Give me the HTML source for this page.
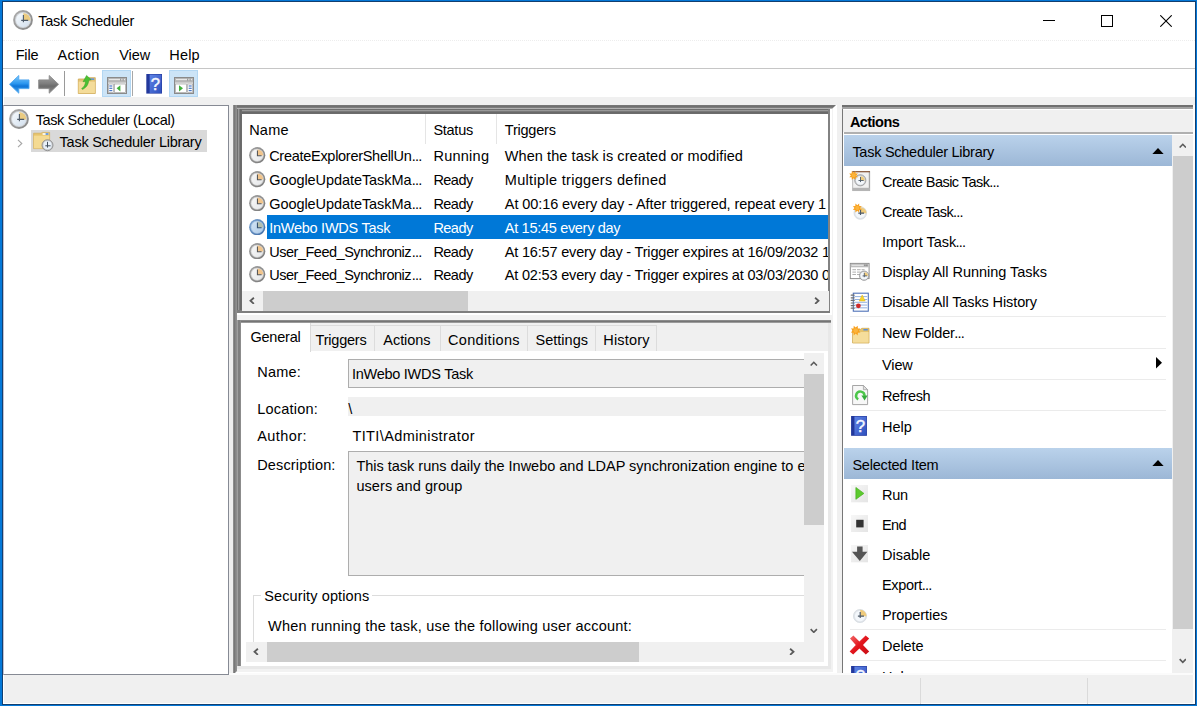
<!DOCTYPE html>
<html lang="en"><head><meta charset="utf-8"><title>Task Scheduler</title>
<style>
html,body{margin:0;padding:0;background:#fff;}
body{width:1197px;height:706px;overflow:hidden;position:relative;font-family:"Liberation Sans", sans-serif;font-size:14.5px;}
#w{position:absolute;left:0;top:0;width:1197px;height:706px;overflow:hidden;}
#w div,#w svg{position:absolute;}
.t{white-space:pre;line-height:20px;height:20px;}
.t span{position:static;}
</style></head>
<body><div id="w">
<div style="left:0.00px;top:0.00px;width:1197.00px;height:706.00px;background:#0478d8;"></div>
<div style="left:2.20px;top:0.90px;width:1193.80px;height:704.00px;background:#123f70;"></div>
<div style="left:3.00px;top:2.00px;width:1191.70px;height:702.00px;background:#ffffff;"></div>
<svg style="left:13.00px;top:10.00px" width="20" height="20" viewBox="0 0 20 20"><defs><linearGradient id="cg1" x1="0" y1="0" x2="1" y2="1"><stop offset="0" stop-color="#aeaeae"/><stop offset="1" stop-color="#858585"/></linearGradient><linearGradient id="cg1f" x1="0" y1="0" x2="1" y2="1"><stop offset="0" stop-color="#f6fafd"/><stop offset="1" stop-color="#d3e0ee"/></linearGradient></defs><circle cx="10" cy="10" r="9.9" fill="url(#cg1)"/><circle cx="10" cy="10" r="8.0" fill="#d2d6db"/><circle cx="10" cy="10" r="7.0" fill="url(#cg1f)"/><path d="M10.4 10.4 V3 A7.3 7.3 0 0 1 17.4 10.4 Z" fill="#ebcb80"/><path d="M10.4 5 V12.2 M8.2 10.4 H15.2" fill="none" stroke="#4d5a68" stroke-width="1.1"/></svg>
<div class="t" style="left:38.20px;top:10.77px;letter-spacing:-0.226px;color:#000;"><span id="t1">Task Scheduler</span></div>
<div style="left:1043.00px;top:20.00px;width:12.00px;height:1.00px;background:#000;"></div>
<div style="left:1101.00px;top:15.00px;width:12.00px;height:12.00px;border:1px solid #000;box-sizing:border-box;"></div>
<svg style="left:1160.00px;top:15.00px" width="12" height="12" viewBox="0 0 12 12"><path d="M0.3 0.3 L11.7 11.7 M11.7 0.3 L0.3 11.7" stroke="#000" stroke-width="1.1" fill="none"/></svg>
<div style="left:3.00px;top:40.00px;width:1191.70px;height:1.00px;border-top:1px dotted #ededed;height:0;"></div>
<div class="t" style="left:15.70px;top:45.17px;letter-spacing:-0.192px;color:#000;"><span id="t2">File</span></div>
<div class="t" style="left:57.50px;top:45.17px;letter-spacing:0.317px;color:#000;"><span id="t3">Action</span></div>
<div class="t" style="left:119.20px;top:45.17px;letter-spacing:-0.024px;color:#000;"><span id="t4">View</span></div>
<div class="t" style="left:169.30px;top:45.17px;letter-spacing:0.157px;color:#000;"><span id="t5">Help</span></div>
<div style="left:3.00px;top:67.60px;width:1191.70px;height:1.80px;background:#c6c6c6;"></div>
<svg style="left:9.00px;top:75.00px" width="21" height="19" viewBox="0 0 21 19"><defs><linearGradient id="ba" x1="0" y1="0" x2="0" y2="1"><stop offset="0" stop-color="#7fccfc"/><stop offset="0.45" stop-color="#2c97ef"/><stop offset="0.6" stop-color="#0f76d8"/><stop offset="1" stop-color="#4aa8f2"/></linearGradient></defs><polygon points="0.5,9.3 9.8,0.5 9.8,4.9 20,4.9 20,13.6 9.8,13.6 9.8,18.2" fill="url(#ba)" stroke="#4fa6ee" stroke-width="0.9" stroke-linejoin="round"/></svg>
<svg style="left:37.50px;top:75.00px" width="21" height="19" viewBox="0 0 21 19"><defs><linearGradient id="fa" x1="0" y1="0" x2="0" y2="1"><stop offset="0" stop-color="#a4a4a4"/><stop offset="0.45" stop-color="#7e7e7e"/><stop offset="0.6" stop-color="#6c6c6c"/><stop offset="1" stop-color="#8e8e8e"/></linearGradient></defs><polygon points="20.5,9.3 11.2,0.5 11.2,4.9 0.7,4.9 0.7,13.6 11.2,13.6 11.2,18.2" fill="url(#fa)" stroke="#8a8a8a" stroke-width="0.9" stroke-linejoin="round"/></svg>
<div style="left:64.00px;top:71.30px;width:1.00px;height:24.70px;background:#9a9a9a;"></div>
<svg style="left:77.00px;top:74.00px" width="20" height="21" viewBox="0 0 20 21"><path d="M1.3 5 H8.5 L10 3.7 H18.3 V19.5 H1.3 Z" fill="#e6c374" stroke="#cfa955" stroke-width="0.8"/><rect x="1.7" y="7.6" width="16.2" height="11.5" fill="#f4dc9a"/><rect x="12.2" y="4.4" width="5" height="1.5" fill="#5a8fd8"/><path d="M4.6 14.6 C6.6 13.2 8.6 11 8.4 7.2 L6 7.8 L9.6 1.4 L14.2 5.8 L11.6 6.4 C11.6 11 8.6 13.8 5.6 15.4 Z" fill="#4cc033" stroke="#35a022" stroke-width="0.5"/></svg>
<div style="left:102.00px;top:70.00px;width:28.70px;height:26.80px;background:#cce4f7;border:1px solid #b3d7f3;box-sizing:border-box;"></div>
<svg style="left:107.00px;top:77.00px" width="20" height="17" viewBox="0 0 20 17"><rect x="0.5" y="0.5" width="19" height="16" fill="#eeeeee" stroke="#8a8a8a"/><rect x="1" y="1" width="18" height="4.6" fill="#b6b6b6"/><rect x="2" y="2.1" width="16" height="1" fill="#ededed"/><rect x="13.2" y="1.6" width="1" height="2" fill="#8a8a8a"/><rect x="15.6" y="1.6" width="1" height="2" fill="#8a8a8a"/><rect x="1.3" y="7" width="5" height="8.6" fill="#fff" stroke="#a2a2a2" stroke-width="0.7"/><rect x="2.3" y="8.4" width="3" height="1.2" fill="#4a78c8"/><rect x="2.3" y="10.7" width="3" height="1.2" fill="#4a78c8"/><rect x="2.3" y="13" width="3" height="1.2" fill="#4a78c8"/><rect x="7.6" y="7" width="11" height="8.6" fill="#fff" stroke="#a2a2a2" stroke-width="0.7"/><polygon points="9.6,11.3 13.4,8.2 13.4,14.4" fill="#3fb03a"/></svg>
<div style="left:132.00px;top:71.30px;width:1.00px;height:24.70px;background:#a8a8a8;"></div>
<svg style="left:145.60px;top:74.00px" width="16.3" height="19.6" viewBox="0 0 16 20"><defs><linearGradient id="hg219" x1="0" y1="0" x2="1" y2="1"><stop offset="0" stop-color="#5f84e6"/><stop offset="1" stop-color="#2d4fbd"/></linearGradient></defs><rect x="0" y="0" width="16" height="20" fill="#22389c"/><rect x="3.4" y="0.6" width="12" height="18.8" fill="url(#hg219)"/><text x="9.4" y="16.2" font-family="Liberation Sans, sans-serif" font-size="17" fill="#f4f6ff" stroke="#f4f6ff" stroke-width="0.5" text-anchor="middle">?</text></svg>
<div style="left:169.20px;top:70.00px;width:28.80px;height:26.80px;background:#cce4f7;border:1px solid #b3d7f3;box-sizing:border-box;"></div>
<svg style="left:174.30px;top:77.00px" width="20" height="17" viewBox="0 0 20 17"><rect x="0.5" y="0.5" width="19" height="16" fill="#eeeeee" stroke="#8a8a8a"/><rect x="1" y="1" width="18" height="4.6" fill="#b6b6b6"/><rect x="2" y="2.1" width="16" height="1" fill="#ededed"/><rect x="13.2" y="1.6" width="1" height="2" fill="#8a8a8a"/><rect x="15.6" y="1.6" width="1" height="2" fill="#8a8a8a"/><rect x="13.7" y="7" width="5" height="8.6" fill="#fff" stroke="#a2a2a2" stroke-width="0.7"/><rect x="14.7" y="8.4" width="3" height="1.2" fill="#4a78c8"/><rect x="14.7" y="10.7" width="3" height="1.2" fill="#4a78c8"/><rect x="14.7" y="13" width="3" height="1.2" fill="#4a78c8"/><rect x="1.4" y="7" width="11" height="8.6" fill="#fff" stroke="#a2a2a2" stroke-width="0.7"/><polygon points="9,11.3 5,8.2 5,14.4" fill="#3fb03a"/></svg>
<div style="left:4.00px;top:97.00px;width:1190.70px;height:8.00px;background:#f0f0f0;"></div>
<div style="left:4.00px;top:105.00px;width:1189.40px;height:570.00px;background:#f0f0f0;"></div>
<div style="left:3.00px;top:105.00px;width:226.00px;height:570.00px;background:#fff;border:1px solid #868a94;border-left-color:#c4c2d0;box-sizing:border-box;"></div>
<svg style="left:9.00px;top:109.00px" width="20" height="20" viewBox="0 0 20 20"><defs><linearGradient id="cg2" x1="0" y1="0" x2="1" y2="1"><stop offset="0" stop-color="#aeaeae"/><stop offset="1" stop-color="#858585"/></linearGradient><linearGradient id="cg2f" x1="0" y1="0" x2="1" y2="1"><stop offset="0" stop-color="#f6fafd"/><stop offset="1" stop-color="#d3e0ee"/></linearGradient></defs><circle cx="10" cy="10" r="9.9" fill="url(#cg2)"/><circle cx="10" cy="10" r="8.0" fill="#d2d6db"/><circle cx="10" cy="10" r="7.0" fill="url(#cg2f)"/><path d="M10.4 10.4 V3 A7.3 7.3 0 0 1 17.4 10.4 Z" fill="#ebcb80"/><path d="M10.4 5 V12.2 M8.2 10.4 H15.2" fill="none" stroke="#4d5a68" stroke-width="1.1"/></svg>
<div class="t" style="left:35.70px;top:109.57px;letter-spacing:-0.386px;color:#000;"><span id="t6">Task Scheduler (Local)</span></div>
<svg style="left:16.50px;top:138.50px" width="6" height="9" viewBox="0 0 6 9"><path d="M1 0.8 L4.8 4.5 L1 8.2" stroke="#a6a6a6" stroke-width="1.1" fill="none"/></svg>
<div style="left:30.60px;top:130.20px;width:176.30px;height:21.80px;background:#d9d9d9;"></div>
<svg style="left:33.00px;top:131.00px" width="21" height="21" viewBox="0 0 21 21"><path d="M0.6 2.2 H8 L9.4 1.4 H16.6 V17.6 H0.6 Z" fill="#e7c46c" stroke="#d3ad57" stroke-width="0.7"/><rect x="0.9" y="4.6" width="15.4" height="12.7" fill="#f4da92"/><rect x="9.6" y="2.2" width="5.8" height="1.6" fill="#fff"/><rect x="12.6" y="2.2" width="2.8" height="1.6" fill="#4d8be0"/><circle cx="14.5" cy="14.2" r="5.5" fill="#c4c7cb" stroke="#858585" stroke-width="0.8"/><circle cx="14.5" cy="14.2" r="4.1" fill="#e9f1f9"/><path d="M14.5 10.8 V16.6 M12.3 14.8 H17.6" stroke="#44515f" stroke-width="1" fill="none"/></svg>
<div class="t" style="left:59.60px;top:132.07px;letter-spacing:-0.257px;color:#000;"><span id="t7">Task Scheduler Library</span></div>
<div style="left:233.00px;top:105.00px;width:603.50px;height:570.00px;background:#fff;"></div>
<div style="left:233.00px;top:105.00px;width:600.00px;height:566.50px;background:#f2f2f2;"></div>
<div style="left:241.80px;top:113.80px;width:586.70px;height:196.40px;background:#fff;"></div>
<div style="left:233.00px;top:105.00px;width:603.00px;height:3.80px;background:linear-gradient(to bottom,#767676 0px 1px,#707070 1px 2px,#7c7c7c 2px 2.7px,#9c9c9c 2.7px 3.8px);clip-path:polygon(0 0,100% 0,calc(100% - 3.8px) 100%,0 100%);"></div>
<div style="left:237.00px;top:108.80px;width:593.00px;height:5.00px;background:linear-gradient(to bottom,#707070 0px 1.3px,#999999 1.3px 2.4px,#787878 2.4px 3.2px,#696969 3.2px 4.2px,#6c6c6c 4.2px 5px);"></div>
<div style="left:233.00px;top:105.00px;width:4.00px;height:570.00px;background:linear-gradient(to right,#8e8e8e 0px 1px,#787878 1px 2px,#868686 2px 3px,#8e8e8e 3px 4px);clip-path:polygon(0 0,100% 0,100% calc(100% - 4px),0 100%);"></div>
<div style="left:237.00px;top:108.80px;width:4.80px;height:204.00px;background:linear-gradient(to right,#6e6e6e 0px 1px,#999999 1px 2px,#7c7c7c 2px 3px,#696969 3px 4px,#6c6c6c 4px 4.8px);"></div>
<div style="left:828.30px;top:109.00px;width:1.90px;height:203.80px;background:#828282;"></div>
<div style="left:237.00px;top:310.30px;width:593.00px;height:2.50px;background:#7e7e7e;"></div>
<div style="left:830.20px;top:109.00px;width:1.50px;height:205.00px;background:#fff;"></div>
<div style="left:237.00px;top:312.90px;width:594.50px;height:2.00px;background:#fff;"></div>
<div style="left:425.00px;top:114.00px;width:1.00px;height:30.00px;background:#e5e5e5;"></div>
<div style="left:496.00px;top:114.00px;width:1.00px;height:30.00px;background:#e5e5e5;"></div>
<div class="t" style="left:249.20px;top:119.97px;letter-spacing:0.204px;color:#000;"><span id="t8">Name</span></div>
<div class="t" style="left:433.40px;top:119.97px;letter-spacing:-0.262px;color:#000;"><span id="t9">Status</span></div>
<div class="t" style="left:504.80px;top:119.97px;letter-spacing:-0.220px;color:#000;"><span id="t10">Triggers</span></div>
<div style="left:0;top:0;width:828.3px;height:291px;overflow:hidden"><svg style="left:249.20px;top:147.40px" width="16.4" height="16.4" viewBox="0 0 20 20"><defs><linearGradient id="cg3" x1="0" y1="0" x2="1" y2="1"><stop offset="0" stop-color="#a2a2a2"/><stop offset="1" stop-color="#787878"/></linearGradient><linearGradient id="cg3f" x1="0" y1="0" x2="1" y2="1"><stop offset="0" stop-color="#f7f7f7"/><stop offset="1" stop-color="#e6e8ea"/></linearGradient></defs><circle cx="10" cy="10" r="9.9" fill="url(#cg3)"/><circle cx="10" cy="10" r="8.0" fill="#cdcdcd"/><circle cx="10" cy="10" r="7.0" fill="url(#cg3f)"/><path d="M10.4 10.4 V3 A7.3 7.3 0 0 1 17.4 10.4 Z" fill="#f1c58c"/><path d="M10.3 4.4 V10.6 H15.4" fill="none" stroke="#555555" stroke-width="1.3"/></svg><div class="t" style="left:269.20px;top:146.37px;letter-spacing:-0.285px;color:#000;"><span id="t11">CreateExplorerShellUn</span></div><div class="t" style="left:411.70px;top:146.37px;letter-spacing:-0.800px;color:#000;"><span id="t12">...</span></div><div class="t" style="left:433.40px;top:146.37px;letter-spacing:0.264px;color:#000;"><span id="t13">Running</span></div><div class="t" style="left:504.80px;top:146.37px;letter-spacing:0.079px;color:#000;"><span id="t14">When the task is created or modified</span></div><svg style="left:249.20px;top:171.20px" width="16.4" height="16.4" viewBox="0 0 20 20"><defs><linearGradient id="cg4" x1="0" y1="0" x2="1" y2="1"><stop offset="0" stop-color="#a2a2a2"/><stop offset="1" stop-color="#787878"/></linearGradient><linearGradient id="cg4f" x1="0" y1="0" x2="1" y2="1"><stop offset="0" stop-color="#f7f7f7"/><stop offset="1" stop-color="#e6e8ea"/></linearGradient></defs><circle cx="10" cy="10" r="9.9" fill="url(#cg4)"/><circle cx="10" cy="10" r="8.0" fill="#cdcdcd"/><circle cx="10" cy="10" r="7.0" fill="url(#cg4f)"/><path d="M10.4 10.4 V3 A7.3 7.3 0 0 1 17.4 10.4 Z" fill="#f1c58c"/><path d="M10.3 4.4 V10.6 H15.4" fill="none" stroke="#555555" stroke-width="1.3"/></svg><div class="t" style="left:269.20px;top:170.17px;letter-spacing:-0.064px;color:#000;"><span id="t15">GoogleUpdateTaskMa</span></div><div class="t" style="left:411.70px;top:170.17px;letter-spacing:-0.800px;color:#000;"><span id="t16">...</span></div><div class="t" style="left:433.40px;top:170.17px;letter-spacing:-0.530px;color:#000;"><span id="t17">Ready</span></div><div class="t" style="left:504.80px;top:170.17px;letter-spacing:0.319px;color:#000;"><span id="t18">Multiple triggers defined</span></div><svg style="left:249.20px;top:195.00px" width="16.4" height="16.4" viewBox="0 0 20 20"><defs><linearGradient id="cg5" x1="0" y1="0" x2="1" y2="1"><stop offset="0" stop-color="#a2a2a2"/><stop offset="1" stop-color="#787878"/></linearGradient><linearGradient id="cg5f" x1="0" y1="0" x2="1" y2="1"><stop offset="0" stop-color="#f7f7f7"/><stop offset="1" stop-color="#e6e8ea"/></linearGradient></defs><circle cx="10" cy="10" r="9.9" fill="url(#cg5)"/><circle cx="10" cy="10" r="8.0" fill="#cdcdcd"/><circle cx="10" cy="10" r="7.0" fill="url(#cg5f)"/><path d="M10.4 10.4 V3 A7.3 7.3 0 0 1 17.4 10.4 Z" fill="#f1c58c"/><path d="M10.3 4.4 V10.6 H15.4" fill="none" stroke="#555555" stroke-width="1.3"/></svg><div class="t" style="left:269.20px;top:193.97px;letter-spacing:-0.064px;color:#000;"><span id="t19">GoogleUpdateTaskMa</span></div><div class="t" style="left:411.70px;top:193.97px;letter-spacing:-0.800px;color:#000;"><span id="t20">...</span></div><div class="t" style="left:433.40px;top:193.97px;letter-spacing:-0.530px;color:#000;"><span id="t21">Ready</span></div><div class="t" style="left:504.80px;top:193.97px;letter-spacing:-0.085px;color:#000;"><span id="t22">At 00:16 every day - After triggered, repeat every 1</span> hour for a duration of 1 day.</div><div style="left:266.80px;top:215.30px;width:562.00px;height:23.40px;background:#0078d7;"></div><svg style="left:249.20px;top:218.80px" width="16.4" height="16.4" viewBox="0 0 20 20"><defs><linearGradient id="cg6" x1="0" y1="0" x2="1" y2="1"><stop offset="0" stop-color="#7fa6d2"/><stop offset="1" stop-color="#3d6aa3"/></linearGradient><linearGradient id="cg6f" x1="0" y1="0" x2="1" y2="1"><stop offset="0" stop-color="#d2e4f5"/><stop offset="1" stop-color="#b0cce8"/></linearGradient></defs><circle cx="10" cy="10" r="9.9" fill="url(#cg6)"/><circle cx="10" cy="10" r="8.0" fill="#a3c2e3"/><circle cx="10" cy="10" r="7.0" fill="url(#cg6f)"/><path d="M10.4 10.4 V3 A7.3 7.3 0 0 1 17.4 10.4 Z" fill="#b5c0b0"/><path d="M10.3 4.4 V10.6 H15.4" fill="none" stroke="#35506e" stroke-width="1.3"/></svg><div class="t" style="left:269.20px;top:217.77px;letter-spacing:-0.259px;color:#fff;"><span id="t23">InWebo IWDS Task</span></div><div class="t" style="left:433.40px;top:217.77px;letter-spacing:-0.530px;color:#fff;"><span id="t24">Ready</span></div><div class="t" style="left:504.80px;top:217.77px;letter-spacing:-0.301px;color:#fff;"><span id="t25">At 15:45 every day</span></div><svg style="left:249.20px;top:242.60px" width="16.4" height="16.4" viewBox="0 0 20 20"><defs><linearGradient id="cg7" x1="0" y1="0" x2="1" y2="1"><stop offset="0" stop-color="#a2a2a2"/><stop offset="1" stop-color="#787878"/></linearGradient><linearGradient id="cg7f" x1="0" y1="0" x2="1" y2="1"><stop offset="0" stop-color="#f7f7f7"/><stop offset="1" stop-color="#e6e8ea"/></linearGradient></defs><circle cx="10" cy="10" r="9.9" fill="url(#cg7)"/><circle cx="10" cy="10" r="8.0" fill="#cdcdcd"/><circle cx="10" cy="10" r="7.0" fill="url(#cg7f)"/><path d="M10.4 10.4 V3 A7.3 7.3 0 0 1 17.4 10.4 Z" fill="#f1c58c"/><path d="M10.3 4.4 V10.6 H15.4" fill="none" stroke="#555555" stroke-width="1.3"/></svg><div class="t" style="left:269.20px;top:241.57px;letter-spacing:-0.481px;color:#000;"><span id="t26">User_Feed_Synchroniz</span></div><div class="t" style="left:411.70px;top:241.57px;letter-spacing:-0.800px;color:#000;"><span id="t27">...</span></div><div class="t" style="left:433.40px;top:241.57px;letter-spacing:-0.530px;color:#000;"><span id="t28">Ready</span></div><div class="t" style="left:504.80px;top:241.57px;letter-spacing:-0.180px;color:#000;"><span id="t29">At 16:57 every day - Trigger expires at 16/09/2032</span> 16:57:00.</div><svg style="left:249.20px;top:266.40px" width="16.4" height="16.4" viewBox="0 0 20 20"><defs><linearGradient id="cg8" x1="0" y1="0" x2="1" y2="1"><stop offset="0" stop-color="#a2a2a2"/><stop offset="1" stop-color="#787878"/></linearGradient><linearGradient id="cg8f" x1="0" y1="0" x2="1" y2="1"><stop offset="0" stop-color="#f7f7f7"/><stop offset="1" stop-color="#e6e8ea"/></linearGradient></defs><circle cx="10" cy="10" r="9.9" fill="url(#cg8)"/><circle cx="10" cy="10" r="8.0" fill="#cdcdcd"/><circle cx="10" cy="10" r="7.0" fill="url(#cg8f)"/><path d="M10.4 10.4 V3 A7.3 7.3 0 0 1 17.4 10.4 Z" fill="#f1c58c"/><path d="M10.3 4.4 V10.6 H15.4" fill="none" stroke="#555555" stroke-width="1.3"/></svg><div class="t" style="left:269.20px;top:265.37px;letter-spacing:-0.481px;color:#000;"><span id="t30">User_Feed_Synchroniz</span></div><div class="t" style="left:411.70px;top:265.37px;letter-spacing:-0.800px;color:#000;"><span id="t31">...</span></div><div class="t" style="left:433.40px;top:265.37px;letter-spacing:-0.530px;color:#000;"><span id="t32">Ready</span></div><div class="t" style="left:504.80px;top:265.37px;letter-spacing:-0.180px;color:#000;"><span id="t33">At 02:53 every day - Trigger expires at 03/03/2030</span> 02:53:00.</div></div>
<div style="left:241.50px;top:291.00px;width:587.00px;height:19.50px;background:#f0f0f0;"></div>
<div style="left:263.00px;top:291.00px;width:205.00px;height:19.50px;background:#cdcdcd;"></div>
<svg style="left:248.60px;top:296.70px" width="6" height="7.6" viewBox="0 0 6 8"><path d="M5 0.8 L1.4 4 L5 7.2" stroke="#5a5a5a" stroke-width="1.9" fill="none"/></svg>
<svg style="left:814.20px;top:296.70px" width="6" height="7.6" viewBox="0 0 6 8"><path d="M1 0.8 L4.6 4 L1 7.2" stroke="#5a5a5a" stroke-width="1.9" fill="none"/></svg>
<div style="left:237.00px;top:319.80px;width:593.80px;height:349.20px;background:#e8e8e8;"></div>
<div style="left:241.00px;top:322.80px;width:586.60px;height:29.00px;background:#f0f0f0;"></div>
<div style="left:241.00px;top:351.00px;width:586.60px;height:314.80px;background:#fff;"></div>
<div style="left:241.00px;top:322.80px;width:69.40px;height:29.00px;background:#fff;"></div>
<div style="left:238.00px;top:319.80px;width:592.70px;height:3.00px;background:linear-gradient(to bottom,#8a8a8a 0 0.8px,#757575 0.8px 2.2px,#9a9a9a 2.2px 3px);"></div>
<div style="left:237.00px;top:319.80px;width:4.00px;height:346.00px;background:linear-gradient(to right,#a0a0a0 0 1px,#808080 1px 3.3px,#8c8c8c 3.3px 4px);"></div>
<div style="left:310.40px;top:325.00px;width:346.60px;height:26.00px;background:#f0f0f0;box-sizing:border-box;border:1px solid #dcdcdc;border-bottom:none;"></div>
<div style="left:374.30px;top:325.00px;width:1.00px;height:26.00px;background:#dcdcdc;"></div>
<div class="t" style="left:315.60px;top:329.57px;letter-spacing:-0.220px;color:#000;"><span id="t34">Triggers</span></div>
<div style="left:439.50px;top:325.00px;width:1.00px;height:26.00px;background:#dcdcdc;"></div>
<div class="t" style="left:383.30px;top:329.57px;letter-spacing:-0.044px;color:#000;"><span id="t35">Actions</span></div>
<div style="left:527.40px;top:325.00px;width:1.00px;height:26.00px;background:#dcdcdc;"></div>
<div class="t" style="left:447.90px;top:329.57px;letter-spacing:0.354px;color:#000;"><span id="t36">Conditions</span></div>
<div style="left:595.00px;top:325.00px;width:1.00px;height:26.00px;background:#dcdcdc;"></div>
<div class="t" style="left:535.50px;top:329.57px;letter-spacing:0.013px;color:#000;"><span id="t37">Settings</span></div>
<div style="left:656.00px;top:325.00px;width:1.00px;height:26.00px;background:#dcdcdc;"></div>
<div class="t" style="left:603.30px;top:329.57px;letter-spacing:0.163px;color:#000;"><span id="t38">History</span></div>
<div style="left:310.00px;top:323.00px;width:1.00px;height:28.50px;background:#d9d9d9;"></div>
<div class="t" style="left:250.40px;top:326.97px;letter-spacing:-0.199px;color:#000;"><span id="t39">General</span></div>
<div style="left:0;top:0;width:803.9px;height:641.6px;overflow:hidden"><div class="t" style="left:257.20px;top:362.37px;letter-spacing:0.220px;color:#000;"><span id="t40">Name:</span></div><div style="left:348.00px;top:359.40px;width:480.00px;height:28.30px;background:#f0f0f0;box-sizing:border-box;border:1px solid #adadad;"></div><div class="t" style="left:351.90px;top:363.67px;letter-spacing:-0.259px;color:#000;"><span id="t41">InWebo IWDS Task</span></div><div class="t" style="left:257.20px;top:398.57px;letter-spacing:0.230px;color:#000;"><span id="t42">Location:</span></div><div style="left:348.00px;top:396.50px;width:480.00px;height:19.70px;background:#f0f0f0;"></div><div class="t" style="left:348.20px;top:398.57px;letter-spacing:0.000px;color:#000;"><span id="t43">\</span></div><div class="t" style="left:257.20px;top:425.97px;letter-spacing:0.442px;color:#000;"><span id="t44">Author:</span></div><div class="t" style="left:352.40px;top:425.97px;letter-spacing:0.405px;color:#000;"><span id="t45">TITI\Administrator</span></div><div class="t" style="left:257.20px;top:454.67px;letter-spacing:0.149px;color:#000;"><span id="t46">Description:</span></div><div style="left:348.00px;top:451.30px;width:480.00px;height:124.60px;background:#f0f0f0;box-sizing:border-box;border:1px solid #adadad;"></div><div class="t" style="left:356.40px;top:456.27px;letter-spacing:-0.006px;color:#000;"><span id="t47">This task runs daily the Inwebo and LDAP synchronization engine to</span> ensure that</div><div class="t" style="left:356.40px;top:475.87px;letter-spacing:0.079px;color:#000;"><span id="t48">users and group</span></div><div style="left:253.00px;top:595.00px;width:600.00px;height:60.00px;box-sizing:border-box;border:1px solid #dcdcdc;"></div><div style="left:261.00px;top:588.00px;width:111.00px;height:16.00px;background:#fff;"></div><div class="t" style="left:264.20px;top:586.27px;letter-spacing:0.122px;color:#000;"><span id="t49">Security options</span></div><div class="t" style="left:268.00px;top:615.97px;letter-spacing:0.220px;color:#000;"><span id="t50">When running the task, use the following user account:</span></div></div>
<div style="left:803.90px;top:352.50px;width:20.10px;height:289.10px;background:#f0f0f0;"></div>
<div style="left:803.90px;top:374.40px;width:20.10px;height:150.60px;background:#cdcdcd;"></div>
<svg style="left:810.20px;top:360.60px" width="7.6" height="5.6" viewBox="0 0 9 6"><path d="M0.8 5 L4.5 1.2 L8.2 5" stroke="#5a5a5a" stroke-width="1.9" fill="none"/></svg>
<svg style="left:810.20px;top:627.60px" width="7.6" height="5.6" viewBox="0 0 9 6"><path d="M0.8 1 L4.5 4.8 L8.2 1" stroke="#5a5a5a" stroke-width="1.9" fill="none"/></svg>
<div style="left:245.50px;top:641.60px;width:578.50px;height:20.10px;background:#f0f0f0;"></div>
<div style="left:266.80px;top:641.60px;width:372.70px;height:20.10px;background:#cdcdcd;"></div>
<svg style="left:252.60px;top:647.80px" width="6" height="7.6" viewBox="0 0 6 8"><path d="M5 0.8 L1.4 4 L5 7.2" stroke="#5a5a5a" stroke-width="1.9" fill="none"/></svg>
<svg style="left:788.60px;top:647.80px" width="6" height="7.6" viewBox="0 0 6 8"><path d="M1 0.8 L4.6 4 L1 7.2" stroke="#5a5a5a" stroke-width="1.9" fill="none"/></svg>
<div style="left:841.50px;top:105.00px;width:352.00px;height:568.00px;background:#fff;box-sizing:border-box;border-style:solid;border-width:0 0 0 1.8px;border-color:#777;"></div>
<div style="left:841.50px;top:105.00px;width:352.00px;height:3.60px;background:linear-gradient(to bottom,#707070 0 2px,#a2a2a2 2px 3.6px);"></div>
<div style="left:843.30px;top:109.60px;width:349.70px;height:22.70px;background:#f0f0f0;"></div>
<div style="left:843.50px;top:132.30px;width:349.50px;height:1.60px;background:#b0b0b0;"></div>
<div class="t" style="left:849.90px;top:111.97px;letter-spacing:-0.545px;color:#000;font-weight:bold;"><span id="t51">Actions</span></div>
<div style="left:843.50px;top:135.00px;width:328.50px;height:30.80px;background:linear-gradient(#bad2eb,#9cb7d6);"></div>
<div class="t" style="left:852.40px;top:142.07px;letter-spacing:-0.267px;color:#000;"><span id="t52">Task Scheduler Library</span></div>
<svg style="left:1152.00px;top:147.50px" width="12" height="6.4" viewBox="0 0 12 6.4"><polygon points="0,6.4 6,0 12,6.4" fill="#000"/></svg>
<div style="left:843.50px;top:447.50px;width:328.50px;height:31.30px;background:linear-gradient(#bad2eb,#9cb7d6);"></div>
<div class="t" style="left:852.40px;top:454.57px;letter-spacing:-0.198px;color:#000;"><span id="t53">Selected Item</span></div>
<svg style="left:1152.00px;top:460.00px" width="12" height="6.4" viewBox="0 0 12 6.4"><polygon points="0,6.4 6,0 12,6.4" fill="#000"/></svg>
<div style="left:0;top:0;width:1172px;height:673px;overflow:hidden"><div class="t" style="left:882.00px;top:172.17px;letter-spacing:-0.537px;color:#000;"><span id="t54">Create Basic Task</span></div><div class="t" style="left:989.30px;top:172.17px;letter-spacing:-0.800px;color:#000;"><span id="t55">...</span></div><div class="t" style="left:882.00px;top:202.17px;letter-spacing:-0.541px;color:#000;"><span id="t56">Create Task</span></div><div class="t" style="left:953.00px;top:202.17px;letter-spacing:-0.800px;color:#000;"><span id="t57">...</span></div><div class="t" style="left:882.00px;top:232.27px;letter-spacing:-0.049px;color:#000;"><span id="t58">Import Task</span></div><div class="t" style="left:955.50px;top:232.27px;letter-spacing:-0.800px;color:#000;"><span id="t59">...</span></div><div class="t" style="left:882.00px;top:262.37px;letter-spacing:-0.036px;color:#000;"><span id="t60">Display All Running Tasks</span></div><div class="t" style="left:882.00px;top:292.27px;letter-spacing:-0.108px;color:#000;"><span id="t61">Disable All Tasks History</span></div><div class="t" style="left:882.00px;top:323.37px;letter-spacing:-0.138px;color:#000;"><span id="t62">New Folder</span></div><div class="t" style="left:954.20px;top:323.37px;letter-spacing:-0.800px;color:#000;"><span id="t63">...</span></div><div class="t" style="left:882.00px;top:354.67px;letter-spacing:-0.124px;color:#000;"><span id="t64">View</span></div><div class="t" style="left:882.00px;top:385.97px;letter-spacing:-0.364px;color:#000;"><span id="t65">Refresh</span></div><div class="t" style="left:882.00px;top:417.37px;letter-spacing:-0.009px;color:#000;"><span id="t66">Help</span></div><div class="t" style="left:882.00px;top:484.57px;letter-spacing:-0.255px;color:#000;"><span id="t67">Run</span></div><div class="t" style="left:882.00px;top:514.67px;letter-spacing:-0.606px;color:#000;"><span id="t68">End</span></div><div class="t" style="left:882.00px;top:544.77px;letter-spacing:0.007px;color:#000;"><span id="t69">Disable</span></div><div class="t" style="left:882.00px;top:574.87px;letter-spacing:-0.304px;color:#000;"><span id="t70">Export</span></div><div class="t" style="left:921.70px;top:574.87px;letter-spacing:-0.800px;color:#000;"><span id="t71">...</span></div><div class="t" style="left:882.00px;top:605.17px;letter-spacing:-0.077px;color:#000;"><span id="t72">Properties</span></div><div class="t" style="left:882.00px;top:635.67px;letter-spacing:-0.064px;color:#000;"><span id="t73">Delete</span></div><div class="t" style="left:882.00px;top:666.97px;letter-spacing:-0.009px;color:#000;"><span id="t74">Help</span></div><div style="left:850.00px;top:316.30px;width:316.00px;height:1.20px;background:#ebebeb;"></div><div style="left:850.00px;top:347.70px;width:316.00px;height:1.20px;background:#ebebeb;"></div><div style="left:850.00px;top:379.00px;width:316.00px;height:1.20px;background:#ebebeb;"></div><div style="left:850.00px;top:409.80px;width:316.00px;height:1.20px;background:#ebebeb;"></div><div style="left:850.00px;top:629.20px;width:316.00px;height:1.20px;background:#ebebeb;"></div><div style="left:850.00px;top:660.30px;width:316.00px;height:1.20px;background:#ebebeb;"></div><svg style="left:1156.00px;top:357.40px" width="6" height="11.4" viewBox="0 0 6 11.4"><polygon points="0,0 6,5.7 0,11.4" fill="#000"/></svg><svg style="left:849.00px;top:170.00px" width="22" height="22" viewBox="0 0 22 22"><rect x="3.7" y="1.6" width="17" height="19" fill="#f1f1f1" stroke="#b4b4b4" stroke-width="0.9"/><rect x="19.8" y="1.6" width="1.2" height="19" fill="#a6a6a6"/><rect x="3.3" y="1.1" width="17.7" height="1.2" fill="#8a583a"/><rect x="3.5" y="17.8" width="17.5" height="3" fill="#b4b4b4"/><circle cx="11.3" cy="10.3" r="5.6" fill="#c9ccd0" stroke="#8d8d8d" stroke-width="0.7"/><circle cx="11.3" cy="10.3" r="4.368" fill="#f3f7fb"/><path d="M11.5 10.5 V6.132 A4.368 4.368 0 0 1 15.868 10.5 Z" fill="#efcb7c"/><path d="M11.5 6.94 V12.092 M9.508 10.5 H14.66" stroke="#4d5a68" stroke-width="0.9" fill="none"/><polygon points="8.94,7.20 6.53,7.33 6.40,9.74 4.60,8.13 2.80,9.74 2.67,7.33 0.26,7.20 1.87,5.40 0.26,3.60 2.67,3.47 2.80,1.06 4.60,2.67 6.40,1.06 6.53,3.47 8.94,3.60 7.33,5.40" fill="#f89f1b"/><circle cx="4.6" cy="5.4" r="2.115" fill="#fbb43c"/></svg><svg style="left:850.00px;top:201.00px" width="20" height="20" viewBox="0 0 20 20"><circle cx="10.3" cy="12" r="6.3" fill="#e0e4e9" stroke="#d3d8de" stroke-width="0.7"/><circle cx="10.3" cy="12" r="4.914" fill="#f3f7fb"/><path d="M10.5 12.2 V6.152 A6.048 6.048 0 0 1 16.548 12.2 Z" fill="#efcb7c"/><path d="M10.5 8.22 V14.016 M8.284 12.2 H14.08" stroke="#4d5a68" stroke-width="1.2" fill="none"/><polygon points="11.73,8.84 9.27,8.97 9.14,11.43 7.30,9.78 5.46,11.43 5.33,8.97 2.87,8.84 4.52,7.00 2.87,5.16 5.33,5.03 5.46,2.57 7.30,4.22 9.14,2.57 9.27,5.03 11.73,5.16 10.08,7.00" fill="#f89f1b"/><circle cx="7.3" cy="7" r="2.16" fill="#fbb43c"/></svg><svg style="left:849.00px;top:260.50px" width="22" height="22" viewBox="0 0 22 22"><rect x="1.3" y="2.4" width="18.8" height="15.2" fill="#fff" stroke="#8e8e8e"/><rect x="1.8" y="2.9" width="17.8" height="3.4" fill="#bdbdbd"/><rect x="2.6" y="3.8" width="12" height="0.9" fill="#f0f0f0"/><rect x="15.4" y="3.5" width="1" height="1.6" fill="#777"/><rect x="17.4" y="3.5" width="1" height="1.6" fill="#777"/><rect x="3.4" y="8.2" width="3.6" height="1" fill="#b0b0b0"/><rect x="8" y="8.2" width="3.6" height="1" fill="#b0b0b0"/><rect x="12.6" y="8.2" width="3" height="1" fill="#b0b0b0"/><rect x="3.4" y="10.6" width="3.6" height="1" fill="#b0b0b0"/><rect x="8" y="10.6" width="3.6" height="1" fill="#b0b0b0"/><rect x="12.6" y="10.6" width="3" height="1" fill="#b0b0b0"/><rect x="3.4" y="13" width="3.6" height="1" fill="#b0b0b0"/><rect x="8" y="13" width="3.6" height="1" fill="#b0b0b0"/><rect x="12.6" y="13" width="3" height="1" fill="#b0b0b0"/><circle cx="15.1" cy="14.7" r="4.7" fill="#c9ccd0" stroke="#8d8d8d" stroke-width="0.7"/><circle cx="15.1" cy="14.7" r="3.666" fill="#f3f7fb"/><path d="M15.3 14.9 V11.234 A3.666 3.666 0 0 1 18.966 14.9 Z" fill="#efcb7c"/><path d="M15.3 11.88 V16.204 M13.596 14.9 H17.92" stroke="#4d5a68" stroke-width="0.9" fill="none"/></svg><svg style="left:849.00px;top:290.50px" width="22" height="22" viewBox="0 0 22 22"><rect x="4.3" y="2.2" width="15" height="18" fill="#fff" stroke="#4f72b8" stroke-width="1.1"/><rect x="5.4" y="5.2" width="12.8" height="0.9" fill="#86a8de"/><rect x="5.4" y="8" width="12.8" height="0.9" fill="#86a8de"/><rect x="5.4" y="10.8" width="12.8" height="0.9" fill="#86a8de"/><rect x="5.4" y="13.6" width="12.8" height="0.9" fill="#86a8de"/><rect x="5.4" y="16.4" width="12.8" height="0.9" fill="#86a8de"/><rect x="1.6" y="3.6" width="4.2" height="1.2" rx="0.6" fill="#6f6f6f"/><rect x="1.6" y="6.2" width="4.2" height="1.2" rx="0.6" fill="#6f6f6f"/><rect x="1.6" y="8.8" width="4.2" height="1.2" rx="0.6" fill="#6f6f6f"/><rect x="1.6" y="11.4" width="4.2" height="1.2" rx="0.6" fill="#6f6f6f"/><rect x="1.6" y="14" width="4.2" height="1.2" rx="0.6" fill="#6f6f6f"/><rect x="1.6" y="16.6" width="4.2" height="1.2" rx="0.6" fill="#6f6f6f"/><polygon points="13.2,4 10.2,10 16.2,10" fill="#f7d42e" stroke="#dcb41c" stroke-width="0.5"/><circle cx="9.4" cy="14.8" r="2.4" fill="#cf2a2a"/></svg><svg style="left:849.00px;top:322.50px" width="22" height="22" viewBox="0 0 22 22"><path d="M3.6 6.6 H11.4 L12.8 5.3 H20 V20 H3.6 Z" fill="#e5c36d" stroke="#cfa955" stroke-width="0.8"/><rect x="4" y="9" width="15.6" height="10.6" fill="#f5dd9b"/><rect x="14.4" y="6" width="4.4" height="1.5" fill="#5a8fd8"/><polygon points="11.50,9.59 8.83,9.73 8.69,12.40 6.70,10.62 4.71,12.40 4.57,9.73 1.90,9.59 3.68,7.60 1.90,5.61 4.57,5.47 4.71,2.80 6.70,4.58 8.69,2.80 8.83,5.47 11.50,5.61 9.72,7.60" fill="#f89f1b"/><circle cx="6.7" cy="7.6" r="2.34" fill="#fbb43c"/></svg><svg style="left:850.00px;top:384.00px" width="20" height="22" viewBox="0 0 20 22"><path d="M2.6 1.5 H13.4 L17.6 5.7 V20.6 H2.6 Z" fill="#f7f7f7" stroke="#9c9c9c" stroke-width="0.9"/><path d="M13.4 1.5 V5.7 H17.6 Z" fill="#e2e2e2" stroke="#9c9c9c" stroke-width="0.7"/><path d="M8.2 15.4 A4.2 4.2 0 1 1 14.5 11.9" fill="none" stroke="#4cc64a" stroke-width="2.5"/><polygon points="11.4,11.6 17.6,11.6 14.6,16.4" fill="#35ad3c"/></svg><svg style="left:851.00px;top:416.40px" width="16" height="19.8" viewBox="0 0 16 20"><defs><linearGradient id="hg1267" x1="0" y1="0" x2="1" y2="1"><stop offset="0" stop-color="#5f84e6"/><stop offset="1" stop-color="#2d4fbd"/></linearGradient></defs><rect x="0" y="0" width="16" height="20" fill="#22389c"/><rect x="3.4" y="0.6" width="12" height="18.8" fill="url(#hg1267)"/><text x="9.4" y="16.2" font-family="Liberation Sans, sans-serif" font-size="17" fill="#f4f6ff" stroke="#f4f6ff" stroke-width="0.5" text-anchor="middle">?</text></svg><svg style="left:851.00px;top:485.40px" width="17.3" height="17.3" viewBox="0 0 17.3 17.3"><defs><linearGradient id="ib485" x1="0" y1="0" x2="1" y2="1"><stop offset="0" stop-color="#f7f7f7"/><stop offset="1" stop-color="#e4e4e4"/></linearGradient></defs><rect width="17.3" height="17.3" fill="url(#ib485)"/><polygon points="4.9,2.5 12.9,8.4 4.9,14.3" fill="#5ccb2e" stroke="#46ad1c" stroke-width="0.7"/></svg><svg style="left:851.00px;top:515.20px" width="17.3" height="17.3" viewBox="0 0 17.3 17.3"><defs><linearGradient id="ib515" x1="0" y1="0" x2="1" y2="1"><stop offset="0" stop-color="#f7f7f7"/><stop offset="1" stop-color="#e4e4e4"/></linearGradient></defs><rect width="17.3" height="17.3" fill="url(#ib515)"/><rect x="5.2" y="4.8" width="7.4" height="7.6" fill="#333"/></svg><svg style="left:851.00px;top:545.30px" width="17.3" height="17.3" viewBox="0 0 17.3 17.3"><defs><linearGradient id="ib545" x1="0" y1="0" x2="1" y2="1"><stop offset="0" stop-color="#f7f7f7"/><stop offset="1" stop-color="#e4e4e4"/></linearGradient></defs><rect width="17.3" height="17.3" fill="url(#ib545)"/><polygon points="6.1,1.6 11.6,1.6 11.6,6.8 16.4,6.8 8.8,16 1,6.8 6.1,6.8" fill="#555"/></svg><svg style="left:853.30px;top:608.50px" width="14" height="14" viewBox="0 0 14 14"><circle cx="7" cy="7" r="6.6" fill="#e0e4e9" stroke="#d3d8de" stroke-width="0.7"/><circle cx="7" cy="7" r="5.148" fill="#f3f7fb"/><path d="M7.2 7.2 V0.864 A6.336 6.336 0 0 1 13.536 7.2 Z" fill="#efcb7c"/><path d="M7.2 3.04 V9.112 M4.888 7.2 H10.96" stroke="#4d5a68" stroke-width="1.2" fill="none"/></svg><svg style="left:849.00px;top:635.00px" width="21" height="20" viewBox="0 0 21 20"><defs><linearGradient id="dx" x1="0" y1="0" x2="1" y2="1"><stop offset="0" stop-color="#f26a6a"/><stop offset="0.5" stop-color="#e2141c"/><stop offset="1" stop-color="#c80f16"/></linearGradient></defs><path d="M1 3.4 L4.4 0.4 L10.4 6.4 L16.6 0.4 L20.2 3.6 L14 10 L20.2 16.4 L16.8 19.6 L10.4 13.4 L4.2 19.6 L0.6 16.4 L6.8 10 Z" fill="url(#dx)"/></svg><svg style="left:851.00px;top:666.40px" width="16" height="19.8" viewBox="0 0 16 20"><defs><linearGradient id="hg1517" x1="0" y1="0" x2="1" y2="1"><stop offset="0" stop-color="#5f84e6"/><stop offset="1" stop-color="#2d4fbd"/></linearGradient></defs><rect x="0" y="0" width="16" height="20" fill="#22389c"/><rect x="3.4" y="0.6" width="12" height="18.8" fill="url(#hg1517)"/><text x="9.4" y="16.2" font-family="Liberation Sans, sans-serif" font-size="17" fill="#f4f6ff" stroke="#f4f6ff" stroke-width="0.5" text-anchor="middle">?</text></svg></div>
<div style="left:1172.00px;top:135.00px;width:21.00px;height:538.00px;background:#f0f0f0;"></div>
<div style="left:1173.20px;top:156.00px;width:19.80px;height:473.00px;background:#cdcdcd;"></div>
<svg style="left:1178.80px;top:142.60px" width="7.6" height="5.6" viewBox="0 0 9 6"><path d="M0.8 5 L4.5 1.2 L8.2 5" stroke="#5a5a5a" stroke-width="1.9" fill="none"/></svg>
<svg style="left:1178.80px;top:658.20px" width="7.6" height="5.6" viewBox="0 0 9 6"><path d="M0.8 1 L4.5 4.8 L8.2 1" stroke="#5a5a5a" stroke-width="1.9" fill="none"/></svg>
<div style="left:1193.00px;top:105.00px;width:1.50px;height:570.00px;background:#fff;"></div>
<div style="left:229.00px;top:673.20px;width:965.00px;height:1.80px;background:#fbfbfb;"></div>
<div style="left:4.00px;top:675.00px;width:1189.40px;height:28.30px;background:#f0f0f0;"></div>
<div style="left:920.00px;top:677.50px;width:1.00px;height:26.00px;background:#dadada;"></div>
<div style="left:1086.50px;top:677.50px;width:1.00px;height:26.00px;background:#dadada;"></div>
</div></body></html>
